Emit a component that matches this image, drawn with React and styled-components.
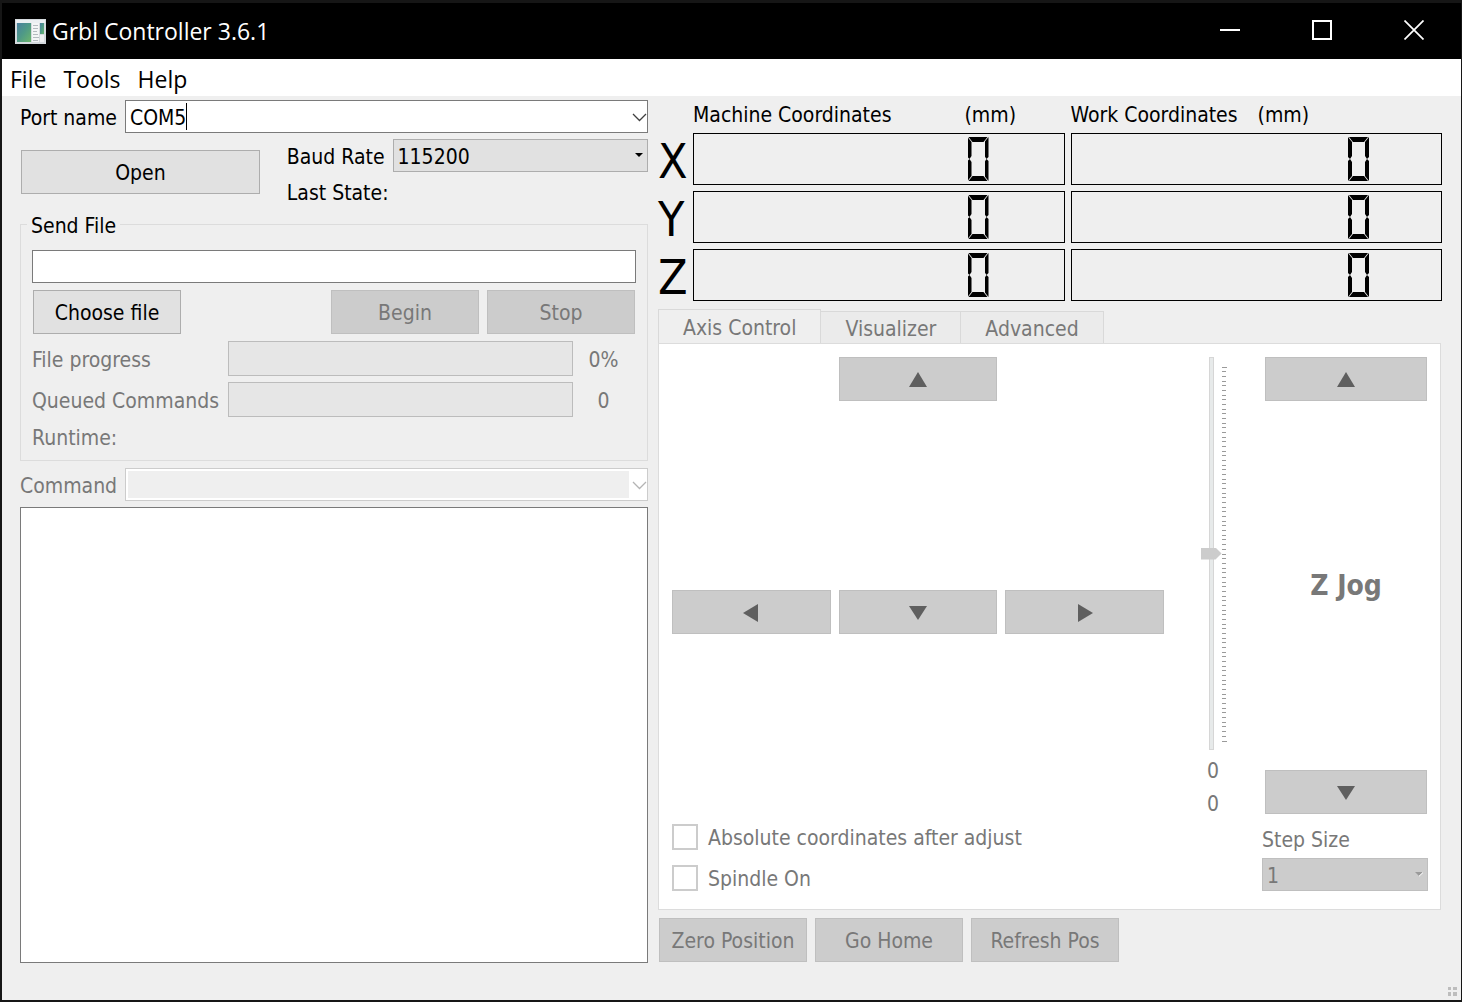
import React, { useState } from 'react';
import styled, { createGlobalStyle } from 'styled-components';

const baudRates = ['9600', '19200', '38400', '57600', '115200'];
const stepSizes = ['0.1', '1', '10'];
const tabs = ['Axis Control', 'Visualizer', 'Advanced'];
const segments = ['a', 'b', 'c', 'd', 'e', 'f'];
const tickCount = 80;

const trianglePoints = {
  up: '1,17 10,2 19,17',
  down: '1,3 19,3 10,17',
  left: '2,10 17,1 17,19',
  right: '3,1 18,10 3,19',
};

const Arrow = ({ direction }) => (
  <svg width="20" height="20" viewBox="0 0 20 20" aria-hidden="true">
    <polygon points={trianglePoints[direction]} fill="#5f5f5f" />
  </svg>
);

const Chevron = () => (
  <svg width="15" height="9" viewBox="0 0 15 9" fill="none" stroke="currentColor" aria-hidden="true">
    <path d="M1 1l6.5 6.5L14 1" strokeWidth="1.3" />
  </svg>
);

const AppIcon = () => (
  <svg width="31" height="25" viewBox="0 0 31 25" aria-hidden="true">
    <defs>
      <linearGradient id="pane" x1="0" y1="0" x2="1" y2="1">
        <stop offset="0" stopColor="#4a7fa0" />
        <stop offset="0.5" stopColor="#4f9a86" />
        <stop offset="1" stopColor="#6db56c" />
      </linearGradient>
    </defs>
    <rect width="31" height="25" fill="#d5dade" />
    <rect x="1" y="1" width="29" height="3" fill="#eceff2" />
    <rect x="2" y="4" width="14" height="19" fill="url(#pane)" />
    <rect x="17" y="4" width="7" height="19" fill="#f4f5f6" />
    <path d="M18 6.500h5M18 9.500h5M18 12.500h4M18 15.500h5M18 18.500h6M18 21.500h5" stroke="#b4babf" />
    <rect x="25" y="4" width="4" height="11" fill="url(#pane)" />
    <rect x="25" y="16" width="4" height="7" fill="#eff0f1" />
  </svg>
);

const Lcd = ({ label, inset }) => (
  <LcdFrame role="img" aria-label={label} $inset={inset}>
    <LcdDigit>
      {segments.map((name) => (
        <Segment key={name} $name={name} />
      ))}
    </LcdDigit>
  </LcdFrame>
);

const App = () => {
  const [port, setPort] = useState('COM5');
  const [baud, setBaud] = useState('115200');

  return (
    <>
      <GlobalStyle />
      <Window>
        <TitleBar>
          <AppIcon />
          <Title>Grbl Controller 3.6.1</Title>
          <WindowButton aria-label="Minimize">
            <svg width="20" height="20" stroke="#fff" strokeWidth="2">
              <path d="M0 10h20" />
            </svg>
          </WindowButton>
          <WindowButton aria-label="Maximize">
            <svg width="20" height="20" fill="none" stroke="#fff" strokeWidth="2">
              <rect x="1" y="1" width="18" height="18" />
            </svg>
          </WindowButton>
          <WindowButton aria-label="Close">
            <svg width="20" height="20" stroke="#fff" strokeWidth="1.7">
              <path d="M0.500 0.500l19 19M19.500 0.500l-19 19" />
            </svg>
          </WindowButton>
        </TitleBar>

        <MenuBar>
          <MenuItem>File</MenuItem>
          <MenuItem>Tools</MenuItem>
          <MenuItem>Help</MenuItem>
        </MenuBar>

        <Main>
          <Column>
            <FieldRow>
              <Label htmlFor="port">Port name</Label>
              <Combo>
                <ComboInput id="port" value={port} onChange={(e) => setPort(e.target.value)} />
                <Caret />
                <ComboToggle aria-label="Show ports">
                  <Chevron />
                </ComboToggle>
              </Combo>
            </FieldRow>

            <ConnectRow>
              <OpenButton>Open</OpenButton>
              <ConnectInfo>
                <FieldRow>
                  <Label htmlFor="baud">Baud Rate</Label>
                  <SelectBox>
                    <Select id="baud" value={baud} onChange={(e) => setBaud(e.target.value)}>
                      {baudRates.map((rate) => (
                        <option key={rate}>{rate}</option>
                      ))}
                    </Select>
                    <SelectArrow viewBox="0 0 8 4">
                      <path d="M0 0h8L4 4z" />
                    </SelectArrow>
                  </SelectBox>
                </FieldRow>
                <Label as="span">Last State:</Label>
              </ConnectInfo>
            </ConnectRow>

            <Group>
              <Legend>Send File</Legend>
              <TextInput aria-label="File path" />
              <ButtonRow>
                <Button $fixed>Choose file</Button>
                <Spacer />
                <Button $fixed disabled>Begin</Button>
                <Button $fixed disabled>Stop</Button>
              </ButtonRow>
              <ProgressRow>
                <Label htmlFor="progress" $dim>File progress</Label>
                <Progress id="progress" value="0" max="100" />
                <Value>0%</Value>
              </ProgressRow>
              <ProgressRow>
                <Label htmlFor="queued" $dim>Queued Commands</Label>
                <Progress id="queued" value="0" max="100" />
                <Value>0</Value>
              </ProgressRow>
              <Label as="span" $dim>Runtime:</Label>
            </Group>

            <FieldRow>
              <Label htmlFor="command" $dim>Command</Label>
              <Combo $disabled>
                <ComboInput id="command" disabled />
                <ComboToggle aria-label="Show commands" disabled>
                  <Chevron />
                </ComboToggle>
              </Combo>
            </FieldRow>

            <Log aria-label="Log" readOnly />
          </Column>

          <Column>
            <Coordinates>
              <span />
              <CoordinateHead $spread>
                <span>Machine Coordinates</span>
                <span>(mm)</span>
              </CoordinateHead>
              <CoordinateHead>
                <span>Work Coordinates</span>
                <span>(mm)</span>
              </CoordinateHead>
              {['X', 'Y', 'Z'].map((axis) => (
                <React.Fragment key={axis}>
                  <AxisName>{axis}</AxisName>
                  <Lcd label="0" inset={75} />
                  <Lcd label="0" inset={72} />
                </React.Fragment>
              ))}
            </Coordinates>

            <TabArea>
              <TabList role="tablist">
                {tabs.map((tab, i) => (
                  <Tab key={tab} role="tab" aria-selected={i === 0} $active={i === 0} disabled>
                    {tab}
                  </Tab>
                ))}
              </TabList>
              <Panel role="tabpanel">
                <JogArea>
                  <JogGrid>
                    <UpButton aria-label="Y up" disabled>
                      <Arrow direction="up" />
                    </UpButton>
                    <JogRow>
                      <Button aria-label="X left" disabled>
                        <Arrow direction="left" />
                      </Button>
                      <Button aria-label="Y down" disabled>
                        <Arrow direction="down" />
                      </Button>
                      <Button aria-label="X right" disabled>
                        <Arrow direction="right" />
                      </Button>
                    </JogRow>
                  </JogGrid>
                  <CheckList>
                    <CheckLabel>
                      <Checkbox type="checkbox" disabled />
                      <Value>Absolute coordinates after adjust</Value>
                    </CheckLabel>
                    <CheckLabel>
                      <Checkbox type="checkbox" disabled />
                      <Value>Spindle On</Value>
                    </CheckLabel>
                  </CheckList>
                </JogArea>

                <SliderColumn>
                  <SliderTrack>
                    <Slider type="range" aria-label="Z jog" min="0" max="100" defaultValue="50" disabled />
                    <Ticks>
                      {Array.from({ length: tickCount + 1 }, (_, i) => (
                        <line
                          key={i}
                          x1="0"
                          x2={i % tickCount === 0 ? 5 : 4}
                          y1={`${(i / tickCount) * 100}%`}
                          y2={`${(i / tickCount) * 100}%`}
                        />
                      ))}
                    </Ticks>
                  </SliderTrack>
                  <Value>0</Value>
                  <Value>0</Value>
                </SliderColumn>

                <ZColumn>
                  <ZJog>
                    <Button aria-label="Z up" disabled>
                      <Arrow direction="up" />
                    </Button>
                    <ZTitle>Z Jog</ZTitle>
                    <Button aria-label="Z down" disabled>
                      <Arrow direction="down" />
                    </Button>
                  </ZJog>
                  <Label htmlFor="step" $dim>Step Size</Label>
                  <SelectBox>
                    <Select id="step" defaultValue="1" disabled>
                      {stepSizes.map((size) => (
                        <option key={size}>{size}</option>
                      ))}
                    </Select>
                    <SelectArrow viewBox="0 0 8 4" $disabled>
                      <path d="M0 0h8L4 4z" />
                      <path d="M4 4.300L8 0.500" stroke="#fff" />
                    </SelectArrow>
                  </SelectBox>
                </ZColumn>
              </Panel>
            </TabArea>

            <ButtonRow>
              <Button $fixed disabled>Zero Position</Button>
              <Button $fixed disabled>Go Home</Button>
              <Button $fixed disabled>Refresh Pos</Button>
            </ButtonRow>
          </Column>
        </Main>

        <StatusBar>
          <svg width="9" height="9" fill="#bdbdbd" aria-hidden="true">
            <path d="M0 0h3v3h-3zM5 0h4v3h-4zM0 5h3v4h-3zM5 5h4v4h-4z" />
          </svg>
        </StatusBar>
      </Window>
    </>
  );
};

export default App;

const GlobalStyle = createGlobalStyle`
  * {
    box-sizing: border-box;
  }

  body {
    margin: 0;
    background: #f0f0f0;
  }

  body,
  button,
  input,
  select,
  textarea {
    font-family: 'DejaVu Sans Condensed', 'DejaVu Sans', sans-serif;
    font-size: 21px;
    line-height: 24px;
    color: #000;
  }
`;

const Window = styled.div`
  min-height: 100vh;
  display: flex;
  flex-direction: column;
  background: #efefef;
  border: solid #161616;
  border-width: 3px 1px 2px 2px;
`;

const TitleBar = styled.header`
  height: 56px;
  display: flex;
  align-items: center;
  padding: 0 1px 0 13px;
  background: #000;
`;

const Title = styled.h1`
  flex: 1;
  margin: 0 0 0 6px;
  color: #fff;
  font-family: 'Open Sans', sans-serif;
  font-size: 23px;
  font-weight: 400;
  line-height: 30px;
`;

const WindowButton = styled.button`
  width: 92px;
  height: 56px;
  display: flex;
  align-items: center;
  justify-content: center;
  padding: 0 0 2px;
  border: 0;
  background: none;
`;

const MenuBar = styled.nav`
  height: 37px;
  display: flex;
  align-items: center;
  gap: 1px;
  background: #fff;
`;

const MenuItem = styled.button`
  padding: 2px 8px 0;
  border: 0;
  background: none;
  font-family: 'Open Sans', sans-serif;
  font-size: 23px;
`;

const Main = styled.main`
  flex: 1;
  display: grid;
  grid-template-columns: 157fr 196fr;
  column-gap: 10px;
  padding: 4px 19px 0 18px;
`;

const Column = styled.section`
  min-width: 0;
  display: flex;
  flex-direction: column;
  gap: 6px;
`;

const FieldRow = styled.div`
  display: flex;
  align-items: center;
  gap: 8px;
`;

const Label = styled.label`
  padding-top: 3px;
  white-space: nowrap;
  color: ${(props) => (props.$dim ? '#787878' : '#000')};
`;

const Value = styled.span`
  padding-top: 3px;
  color: #787878;
  text-align: center;
`;

const Combo = styled.div`
  flex: 1;
  min-width: 0;
  height: 33px;
  display: flex;
  align-items: center;
  padding: 2px 0 2px 2px;
  border: 1px solid ${(props) => (props.$disabled ? '#cccccc' : '#7a7a7a')};
  background: #fff;
`;

const ComboInput = styled.input`
  field-sizing: content;
  height: 27px;
  padding: 3px 0 0 2px;
  border: 0;
  outline: 0;
  background: none;

  &:disabled {
    flex: 1;
    background: #efefef;
  }
`;

const Caret = styled.span`
  width: 1px;
  height: 27px;
  background: #000;
`;

const ComboToggle = styled.button`
  width: 18px;
  display: flex;
  justify-content: flex-end;
  margin-left: auto;
  padding: 2px 0 0;
  border: 0;
  background: none;
  color: #404040;

  &:disabled {
    color: #b4b4b4;
  }
`;

const Button = styled.button`
  height: 44px;
  display: flex;
  align-items: center;
  justify-content: center;
  width: ${(props) => (props.$fixed ? '148px' : 'auto')};
  padding: 2px 0 0;
  border: 1px solid #adadad;
  background: #e1e1e1;
  white-space: nowrap;

  &:disabled {
    border-color: #bfbfbf;
    background: #cccccc;
    color: #787878;
  }
`;

const OpenButton = styled(Button)`
  margin: 0 1px;
`;

const ConnectRow = styled.div`
  display: grid;
  grid-template-columns: 2fr 3fr;
  align-items: center;
  column-gap: 26px;
`;

const ConnectInfo = styled.div`
  display: flex;
  flex-direction: column;
  gap: 6px;
`;

const SelectBox = styled.div`
  flex: 1;
  position: relative;
`;

const Select = styled.select`
  appearance: none;
  display: block;
  width: 100%;
  height: 33px;
  padding: 3px 20px 0 4px;
  border: 1px solid #adadad;
  border-radius: 0;
  background: #e1e1e1;

  &:disabled {
    border-color: #bfbfbf;
    background: #cccccc;
    color: #787878;
    opacity: 1;
  }
`;

const SelectArrow = styled.svg`
  position: absolute;
  top: 14px;
  right: 5px;
  width: 8px;
  height: 4px;
  overflow: visible;
  pointer-events: none;
  fill: ${(props) => (props.$disabled ? '#9a9a9a' : '#000')};
`;

const Group = styled.fieldset`
  min-width: 0;
  display: flex;
  flex-direction: column;
  gap: 6px;
  margin: 0 0 1px;
  padding: 12px 11px 10px;
  border: 1px solid #dcdcdc;
`;

const Legend = styled.legend`
  margin-left: -5px;
  padding: 3px 4px 0;
`;

const TextInput = styled.input`
  height: 33px;
  padding: 3px 4px 0;
  border: 1px solid #7a7a7a;
  outline: 0;
  background: #fff;
`;

const ButtonRow = styled.div`
  display: flex;
  gap: 8px;
  padding: 1px;
`;

const Spacer = styled.div`
  flex: 1;
`;

const ProgressRow = styled.div`
  display: grid;
  grid-template-columns: 190px 1fr 49px;
  align-items: center;
  column-gap: 6px;
  padding-right: 8px;
`;

const Progress = styled.progress`
  appearance: none;
  width: 100%;
  height: 35px;
  border: 1px solid #bcbcbc;
  background: #e6e6e6;

  &::-webkit-progress-bar {
    background: #e6e6e6;
  }
`;

const Log = styled.textarea`
  flex: 1;
  resize: none;
  padding: 4px;
  border: 1px solid #7a7a7a;
  outline: 0;
  background: #fff;
`;

const Coordinates = styled.div`
  display: grid;
  grid-template-columns: 29px 1fr 1fr;
  gap: 6px;
`;

const CoordinateHead = styled.div`
  display: grid;
  grid-template-columns: ${(props) => (props.$spread ? '1fr 100px' : 'auto 1fr')};
  column-gap: ${(props) => (props.$spread ? '0' : '20px')};
  padding-top: 3px;
  white-space: nowrap;
`;

const AxisName = styled.span`
  height: 52px;
  font-size: 48px;
  line-height: 56px;
`;

const LcdFrame = styled.div`
  height: 52px;
  display: flex;
  align-items: center;
  justify-content: flex-end;
  padding-right: ${(props) => props.$inset}px;
  border: 1px solid #000;
`;

const LcdDigit = styled.span`
  position: relative;
  width: 21px;
  height: 44px;
`;

const segmentShapes = {
  a: 'top: 0; left: 0; width: 21px; height: 5px; clip-path: polygon(1px 0, 20px 0, 16px 100%, 5px 100%);',
  b: 'top: 0; right: 0; width: 4px; height: 22px; clip-path: polygon(100% 0, 100% 20px, 2px 100%, 0 19px, 0 5px);',
  c: 'bottom: 0; right: 0; width: 4px; height: 22px; clip-path: polygon(100% 100%, 100% 2px, 2px 0, 0 3px, 0 17px);',
  d: 'bottom: 0; left: 0; width: 21px; height: 5px; clip-path: polygon(1px 100%, 20px 100%, 16px 0, 5px 0);',
  e: 'bottom: 0; left: 0; width: 4px; height: 22px; clip-path: polygon(0 100%, 0 2px, 2px 0, 100% 3px, 100% 17px);',
  f: 'top: 0; left: 0; width: 4px; height: 22px; clip-path: polygon(0 0, 0 20px, 2px 100%, 100% 19px, 100% 5px);',
};

const Segment = styled.i`
  position: absolute;
  background: #000;
  ${(props) => segmentShapes[props.$name]}
`;

const TabArea = styled.div`
  flex: 1;
  display: flex;
  flex-direction: column;
  padding: 2px 1px 1px 0;
`;

const TabList = styled.div`
  display: flex;
  align-items: flex-end;
`;

const Tab = styled.button`
  height: ${(props) => (props.$active ? '34px' : '32px')};
  padding: 3px 24px 0;
  border: 1px solid #d9d9d9;
  border-bottom: 0;
  border-left-width: ${(props) => (props.$active ? '1px' : '0')};
  background: ${(props) => (props.$active ? '#efefef' : '#ebebeb')};
  color: #787878;
`;

const Panel = styled.div`
  flex: 1;
  display: flex;
  padding: 13px 12px 18px 13px;
  border: 1px solid #dcdcdc;
  background: #fff;
`;

const JogArea = styled.div`
  flex: 1;
  display: flex;
  flex-direction: column;
`;

const JogGrid = styled.div`
  flex: 1;
  display: grid;
  grid-template-rows: auto 1fr auto 1fr;
`;

const JogRow = styled.div`
  grid-row: 3;
  display: grid;
  grid-template-columns: repeat(3, 1fr);
  gap: 8px;
`;

const UpButton = styled(Button)`
  width: calc((100% - 16px) / 3);
  justify-self: center;
`;

const CheckList = styled.div`
  display: flex;
  flex-direction: column;
  gap: 14px;
`;

const CheckLabel = styled.label`
  display: flex;
  align-items: center;
  gap: 10px;
`;

const Checkbox = styled.input`
  appearance: none;
  width: 26px;
  height: 26px;
  margin: 0;
  border: 2px solid #cccccc;
  background: #fff;
`;

const SliderColumn = styled.div`
  width: 98px;
  display: flex;
  flex-direction: column;
  align-items: center;
  gap: 6px;
  padding-bottom: 75px;
`;

const SliderTrack = styled.div`
  flex: 1;
  width: 25px;
  display: flex;
  contain: size;
`;

const Slider = styled.input`
  appearance: none;
  writing-mode: vertical-lr;
  direction: rtl;
  width: 21px;
  margin: 0;
  background: none;

  &::-webkit-slider-runnable-track {
    width: 5px;
    border: 1px solid #d6d6d6;
    background: #e7eaea;
  }

  &::-webkit-slider-thumb {
    appearance: none;
    width: 21px;
    height: 12px;
    margin-left: -9px;
    background: #cccccc;
    clip-path: polygon(0 0, 15px 0, 100% 50%, 15px 100%, 0 100%);
  }
`;

const Ticks = styled.svg`
  width: 4px;
  height: auto;
  margin: 10px 0 9px;
  overflow: visible;
  stroke: #9a9a9a;
  shape-rendering: crispEdges;
`;

const ZColumn = styled.div`
  width: 166px;
  display: flex;
  flex-direction: column;
  gap: 6px;

  ${SelectBox} {
    flex: none;
  }
`;

const ZJog = styled.div`
  flex: 1;
  display: flex;
  flex-direction: column;
  padding: 0 1px 5px 3px;
`;

const ZTitle = styled.h2`
  flex: 1;
  display: flex;
  align-items: center;
  justify-content: center;
  margin: 0;
  color: #787878;
  font-size: 28px;
`;

const StatusBar = styled.footer`
  height: 37px;
  display: flex;
  align-items: flex-end;
  justify-content: flex-end;
  padding: 4px;
`;
